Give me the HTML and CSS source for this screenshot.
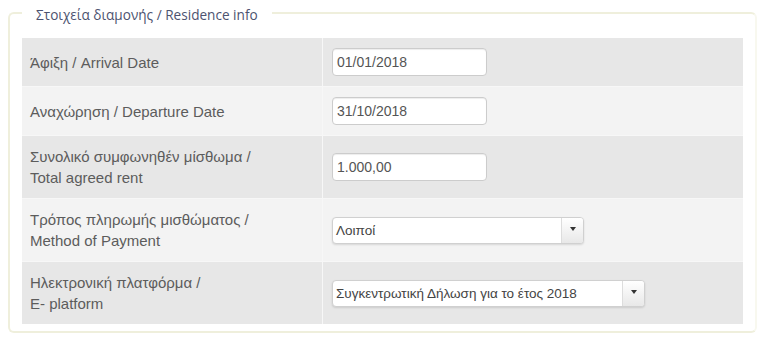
FILE: index.html
```html
<!DOCTYPE html>
<html lang="el">
<head>
<meta charset="utf-8">
<title>Residence info</title>
<link rel="stylesheet" href="styles.css">
</head>
<body>
<fieldset class="box">
  <legend class="box-title">Στοιχεία διαμονής / Residence info</legend>
  <div class="grid">
    <div class="row dark">
      <div class="label">Άφιξη / Arrival Date</div>
      <div class="field"><div class="input">01/01/2018</div></div>
    </div>
    <div class="row light">
      <div class="label">Αναχώρηση / Departure Date</div>
      <div class="field"><div class="input">31/10/2018</div></div>
    </div>
    <div class="row dark">
      <div class="label">Συνολικό συμφωνηθέν μίσθωμα /<br>Total agreed rent</div>
      <div class="field"><div class="input">1.000,00</div></div>
    </div>
    <div class="row light">
      <div class="label">Τρόπος πληρωμής μισθώματος /<br>Method of Payment</div>
      <div class="field">
        <div class="select sel-short"><span class="sel-text">Λοιποί</span><span class="sel-btn"><span class="caret"></span></span></div>
      </div>
    </div>
    <div class="row dark">
      <div class="label">Ηλεκτρονική πλατφόρμα /<br>E- platform</div>
      <div class="field">
        <div class="select sel-long"><span class="sel-text">Συγκεντρωτική Δήλωση για το έτος 2018</span><span class="sel-btn"><span class="caret"></span></span></div>
      </div>
    </div>
  </div>
</fieldset>
</body>
</html>
```

FILE: styles.css
```css
html, body {
  margin: 0;
  padding: 0;
  background: #ffffff;
}
body {
  font-family: "Liberation Sans", Arial, sans-serif;
  font-size: 15px;
  color: #555555;
}
.box {
  margin: 1px 11px 0 8px;
  border: 2px solid #efefdc;
  border-right-color: #f8f8ef;
  border-radius: 6px;
  padding: 13px 12px 7px 12px;
  min-width: 0;
}
.box-title {
  padding: 4px 14px 0 14px;
  margin: 0;
  font-family: "Open Sans", "Liberation Sans", sans-serif;
  font-size: 13.6px;
  line-height: 20px;
  color: #4d5370;
}
.grid {
  display: flex;
  flex-direction: column;
}
.row {
  display: grid;
  grid-template-columns: 300px 1fr;
}
.row + .row {
  border-top: 1px solid #f7f7f7;
}
.dark { background: #e7e7e7; }
.light { background: #f3f3f3; }
.label {
  padding: 10px 8px;
  line-height: 21px;
  display: flex;
  align-items: center;
  color: #5c5c5c;
}
.field {
  border-left: 1px solid #f7f7f7;
  padding: 10px 9px;
  display: flex;
  align-items: center;
}
.input {
  width: 155px;
  height: 28px;
  box-sizing: border-box;
  border: 1px solid #cccccc;
  border-radius: 4px;
  background: #ffffff;
  box-shadow: inset 0 1px 1px rgba(0,0,0,0.075);
  padding: 0 4px;
  font-size: 14px;
  line-height: 26px;
  color: #555555;
}
.select {
  height: 27px;
  box-sizing: border-box;
  border: 1px solid #d0d0d0;
  border-radius: 4px;
  background: #ffffff;
  box-shadow: 0 1px 2px rgba(0,0,0,0.12);
  display: flex;
  overflow: hidden;
}
.sel-short { width: 252px; }
.sel-long { width: 313px; }
.sel-text {
  flex: 1;
  padding-left: 3px;
  font-size: 13.5px;
  line-height: 25px;
  color: #444444;
  white-space: nowrap;
}
.sel-btn {
  width: 21px;
  border-left: 1px solid #dddddd;
  background: linear-gradient(#ffffff, #e8e8e8);
  display: flex;
  align-items: center;
  justify-content: center;
}
.caret {
  width: 0;
  height: 0;
  border-top: 4px solid #333333;
  border-left: 3px solid transparent;
  border-right: 3px solid transparent;
  margin-top: -3px;
}
```
